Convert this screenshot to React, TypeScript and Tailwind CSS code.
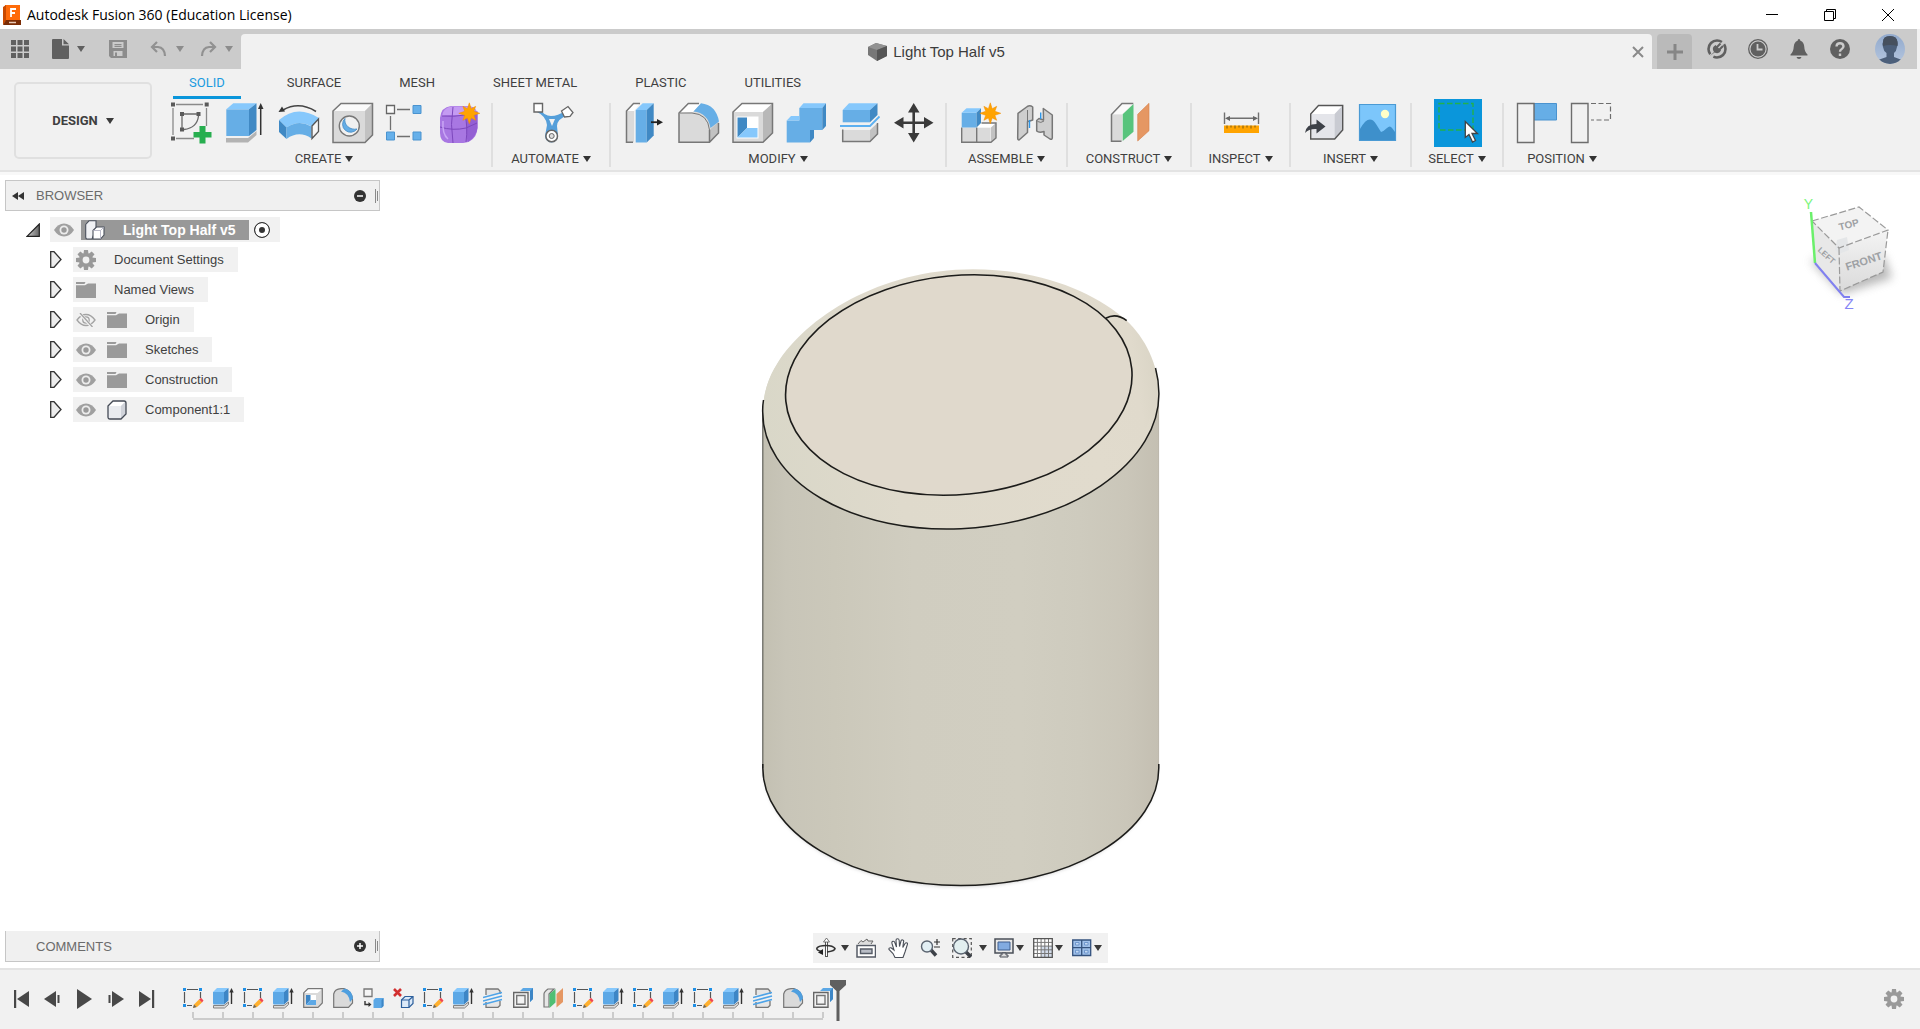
import React from "react";

type P = { className?: string };

/* ---------- small shared pieces ---------- */

function Caret({ className = "text-[#3a3a3a]" }: P) {
  return (
    <svg viewBox="0 0 8 6" className={"h-[6px] w-2 shrink-0 " + className} fill="currentColor" aria-hidden="true">
      <path d="M0 0H8L4 6z" />
    </svg>
  );
}

function Burst({ x, y, s = 1 }: { x: number; y: number; s?: number }) {
  return (
    <path
      transform={`translate(${x} ${y}) scale(${s})`}
      fill="#ffa300"
      stroke="#f08c00"
      strokeWidth=".5"
      d="M0-10.5 1.9-4.6 6.4-7 4.6-2 10.5 0 4.6 2 6.4 7 1.9 4.6 0 10.5-1.9 4.6-6.4 7-4.6 2-10.5 0-4.6-2-6.4-7-1.9-4.6z"
    />
  );
}

function Tile({ children }: { children: React.ReactNode }) {
  return (
    <svg viewBox="0 0 48 48" className="size-12" aria-hidden="true">
      {children}
    </svg>
  );
}

/* ---------- ribbon icons ---------- */

const SketchIcon = (
  <Tile>
    <path d="M10 5.5H37M7 9V36M10 39.5H28M40.5 9V27" stroke="#8a8a8a" strokeWidth="1.3" fill="none" />
    <path d="M5 3.5h4v4H5zM38.700 3.500h4v4h-4zM5 37.500h4v4H5zM14 13h4v4h-4zM30.500 13h4v4h-4zM14 28.500h4v4h-4z" fill="#5a5a5a" />
    <path d="M18 15H31M16 17V29M32.500 17Q31 29 18 30.500" stroke="#6a6a6a" strokeWidth="1.300" fill="none" />
    <path d="M33.500 27h6v6h6v5.500h-6v6h-6v-6h-6V33h6z" fill="#27ae4f" />
  </Tile>
);

const ExtrudeIcon = (
  <Tile>
    <path d="M6 39H28L36.500 32V36L28 43.500H6z" fill="#b3b3b3" />
    <path d="M6.300 10.300H29V37H6.300z" fill="#66aee6" />
    <path d="M6.300 10.300 13.300 4.300H36.500L29 10.300z" fill="#86c8fc" />
    <path d="M29 10.300 36.500 4.300V31L29 37z" fill="#4089c4" />
    <path d="M40.700 8V36" stroke="#333" strokeWidth="1.500" />
    <path d="M40.700 4 43.500 10H38z" fill="#333" />
  </Tile>
);

const RevolveIcon = (
  <Tile>
    <path d="M42 12.500Q25 2 9 11" stroke="#444" strokeWidth="1.500" fill="none" />
    <path d="M4.500 13 8 7.500 11 12.500z" fill="#333" />
    <path d="M5 21Q23 5 45 19L38 27.500Q25 20 12.500 28.500z" fill="#86c8fc" />
    <path d="M5 21 12.500 28.500V40L5 33z" fill="#4089c4" />
    <path d="M12.500 28.500Q25 20 37.500 27.500V39.500Q25 31 12.500 40z" fill="#66aee6" />
    <path d="M38 27 44.500 20V32.500L38 39.500z" fill="#f6f6f6" stroke="#555" strokeWidth="1.300" />
  </Tile>
);

const HoleIcon = (
  <Tile>
    <path d="M5 12 13 4.500H44.500V36L37 43.500H5z" fill="#dadada" />
    <path d="M5 12 13 4.500H44.500L37 12z" fill="#fafafa" />
    <path d="M37 12 44.500 4.500V36L37 43.500z" fill="#c2c2c2" />
    <path d="M5 12 13 4.500H44.500V36L37 43.500H5z" fill="none" stroke="#777" strokeWidth="1.500" />
    <circle cx="21.300" cy="27" r="10" fill="#f1f1f1" stroke="#777" strokeWidth="1.400" />
    <path d="M17 19.500A10 9 0 0 0 29 30 8 8 0 1 1 17 19.500z" fill="#66aee6" stroke="#4089c4" strokeWidth=".8" />
  </Tile>
);

const PatternIcon = (
  <Tile>
    <path d="M15 10.500H28M8.500 17V31M15 37.500H28" stroke="#707070" strokeWidth="1.300" />
    <path d="M4.500 6.500h8v8h-8z" fill="#fafafa" stroke="#666" strokeWidth="1.300" />
    <path d="M31 6.500h8v8h-8zM4.500 33h8v8h-8zM31 33h8v8h-8z" fill="#66b0ea" stroke="#4a93cf" strokeWidth="1" />
  </Tile>
);

const FormIcon = (
  <Tile>
    <path d="M4 19Q5 8 15 7H33Q41 8 41.500 16V29Q41 38 34 42Q31 44 24 44H12Q4 43 4 34z" fill="#a877e2" />
    <path d="M6 17Q7 9 15 7.500H33Q38 8 40 12 34 15 29 16H14Q9 16 6 17z" fill="#c49bf2" />
    <path d="M30 17Q37 15 41.500 12V29Q40 38 32 43 30 40 30 17z" fill="#9460d4" />
    <path d="M17 8Q14 25 17 44M4 28Q17 32 30 29L41 24M29 16Q32 28 30 43M6 17Q18 18 29 16" stroke="#7d48bd" strokeWidth="1" fill="none" />
    <path d="M7 22Q6 35 12 40" stroke="#c9a6f5" strokeWidth="1.500" fill="none" />
    <Burst x={33.300} y={14.300} />
  </Tile>
);

const AutomateIcon = (
  <Tile>
    <path d="M12 10Q16 17 23 17 30 17 37 12L40 16Q29 20 29 27L30 37A6.500 6.500 0 0 1 17 37L19 26Q18 17 9 13z" fill="#559fda" />
    <path d="M21 20H27L24 27z" fill="#f1f1f1" />
    <path d="M6 4.500h8.500v8.500H6z" fill="#fff" stroke="#666" strokeWidth="1.400" />
    <path d="M33.500 12 40 7.500 45 13.500 42 17.500 36.500 18z" fill="#fff" stroke="#666" strokeWidth="1.300" />
    <circle cx="23.700" cy="37" r="5.800" fill="#fff" stroke="#666" strokeWidth="1.500" />
    <circle cx="23.700" cy="37" r="2.500" fill="#ddd" stroke="#666" strokeWidth="1" />
  </Tile>
);

const PressPullIcon = (
  <Tile>
    <path d="M6.500 43.300V12L13.500 4.500H20L14 11V43.300z" fill="#dadada" />
    <path d="M6.500 12 13.500 4.500H20L14 12z" fill="#fff" />
    <path d="M20 4.500H13.500L6.500 12V43.300H13" fill="none" stroke="#777" strokeWidth="1.500" />
    <path d="M15.700 11H26.700V43.500H15.700z" fill="#66aee6" />
    <path d="M15.700 11 22.700 4.300H33.700L26.700 11z" fill="#86c8fc" />
    <path d="M26.700 11 33.700 4.300V36.500L26.700 43.500z" fill="#4089c4" />
    <path d="M31 23.200H38" stroke="#222" strokeWidth="1.800" />
    <path d="M37 20 43 23.200 37 26.500z" fill="#222" />
  </Tile>
);

const FilletIcon = (
  <Tile>
    <path d="M5 43.300V14L14.300 4.500H27L44.500 23V34L35.500 43.300z" fill="#dadada" />
    <path d="M5 14 14.300 4.500H27L19 13z" fill="#fff" />
    <path d="M35.500 31 44.500 23V34L35.500 43.300z" fill="#c2c2c2" />
    <path d="M19.500 12.500 27 4.300Q42 6 45 22.500L36.500 29Q34 14 19.500 12.500z" fill="#66aee6" />
    <path d="M25 4.500H14.300L5 14V43.300H35.500L44.500 34V24M35.500 43V31" fill="none" stroke="#777" strokeWidth="1.500" />
    <path d="M6 14H18Q34 15 35.500 31" fill="none" stroke="#777" strokeWidth="1" />
  </Tile>
);

const ShellIcon = (
  <Tile>
    <path d="M5 13 14 4.500H44.500V34L35 43.300H5z" fill="#dadada" />
    <path d="M5 13 14 4.500H44.500L35 13z" fill="#fff" />
    <path d="M35 13 44.500 4.500V34L35 43.300z" fill="#b8b8b8" />
    <path d="M5 13 14 4.500H44.500V34L35 43.300H5z" fill="none" stroke="#777" strokeWidth="1.500" />
    <path d="M8.500 17.500h22v22h-22z" fill="#fff" />
    <path d="M9.500 18.500H19V29L9.500 38.500z" fill="#4089c4" />
    <path d="M9.500 38.500 19 29H29.500V38.500z" fill="#86c8fc" />
  </Tile>
);

const CombineIcon = (
  <Tile>
    <path d="M4.700 21.500H17.300V9H40.300V31H28V43.500H4.700z" fill="#66aee6" />
    <path d="M17.300 9 21.500 4.300H44L40.300 9zM4.700 21.500 9 17H17.300V21.500z" fill="#86c8fc" />
    <path d="M40.300 9 44 4.300V27L40.300 31zM28 31H32V39L28 43.500z" fill="#4089c4" />
  </Tile>
);

const SplitIcon = (
  <Tile>
    <path d="M6.700 11H34V23.300H6.700z" fill="#66aee6" />
    <path d="M6.700 11 13 4.300H41.500L34 11z" fill="#86c8fc" />
    <path d="M34 11 41.500 4.300V16L34 23.300z" fill="#4089c4" />
    <path d="M4 27H34L43.500 17.500" stroke="#5db0f0" strokeWidth="1.800" fill="none" />
    <path d="M6.700 31H34V42.500H6.700z" fill="#dadada" />
    <path d="M34 31 41.500 24V35L34 42.500z" fill="#c2c2c2" />
    <path d="M6.700 30.500V42.500H34L41.500 35V24" stroke="#777" strokeWidth="1.500" fill="none" />
  </Tile>
);

const MoveIcon = (
  <Tile>
    <path d="M23.700 10V38M10 23.700H38" stroke="#3a3a3a" strokeWidth="2.600" />
    <path
      fill="#3a3a3a"
      d="M23.700 4 29.500 13.500H18zM23.700 43.500 29.500 34H18zM4 23.700 13.500 18V29.500zM43.500 23.700 34 18V29.500z"
    />
  </Tile>
);

const NewComponentIcon = (
  <Tile>
    <path d="M5.700 28.500H34.500V43.300H5.700z" fill="#dadada" />
    <path d="M21 28.500 25.500 24H40L35 28.500z" fill="#fff" />
    <path d="M35 28.500 40 24V39L35 43.300z" fill="#c2c2c2" />
    <path d="M5.700 28.500V43.300H35L40 39V24H25.500M20.700 28.500V43" stroke="#777" strokeWidth="1.400" fill="none" />
    <path d="M5.700 13.700H20.500V28.500H5.700z" fill="#66aee6" />
    <path d="M5.700 13.700 10.500 9.300H25L20.500 13.700z" fill="#86c8fc" />
    <path d="M20.500 13.700 25 9.300V24L20.500 28.500z" fill="#4089c4" />
    <Burst x={34.300} y={14.300} />
  </Tile>
);

const JointIcon = (
  <Tile>
    <g stroke="#777" strokeWidth="1.500" strokeLinejoin="round" fill="#cfcfcf">
      <path d="M8 14.300 17.300 7.500Q20 6 22.700 8V21L17.500 22.700V33.500L9 41Q7.700 41 7.700 39z" />
      <path d="M33.300 9.500 42.300 16V39Q42 41 40 40L34 36V32.500Q29 34 26.700 32V21.500L29 19.500 33.500 21z" />
    </g>
    <path d="M17.500 11V22M27.500 22.500Q31 24.500 34 22" stroke="#777" strokeWidth="1" fill="none" />
    <path d="M19.500 21V29M30.700 13.500V20" stroke="#2d96e8" strokeWidth="1.400" />
  </Tile>
);

const PlaneIcon = (
  <Tile>
    <path d="M5.500 15.500H16V42H5.500z" fill="#dadada" />
    <path d="M5.500 15 16 4.500H27.300L16 15z" fill="#fafafa" />
    <path d="M27.300 4.500H16L5.500 15.500V42.300H15.500" fill="none" stroke="#777" strokeWidth="1.500" />
    <path d="M16.700 15.300 27.500 5V32.700L16.700 42z" fill="#58c47c" />
    <path d="M31.700 15.300 43 4.300V31.700L31.700 42z" fill="#e59763" stroke="#d67f49" strokeWidth=".6" />
  </Tile>
);

const MeasureIcon = (
  <Tile>
    <path d="M7.500 13.500V25M41.500 13.500V25M10 19.300H39" stroke="#707070" strokeWidth="1.400" />
    <path d="M8 19.300 13 17V22zM41 19.300 36 17V22z" fill="#666" />
    <path d="M7 26.500h35v7.500H7z" fill="#ffa400" />
    <path d="M10 26.500v3M14 26.500v2M18 26.500v3M22 26.500v2M26 26.500v3M30 26.500v2M34 26.500v3M38 26.500v2" stroke="#7a5a10" strokeWidth="1" />
  </Tile>
);

const InsertIcon = (
  <Tile>
    <path d="M10.700 15 18.500 6.500H42.700V31L34.700 40H10.700z" fill="#e4e5ea" />
    <path d="M10.700 15 18.500 6.500H42.700L34.700 15z" fill="#fff" />
    <path d="M34.700 15 42.700 6.500V31L34.700 40z" fill="#c9cbd2" />
    <path d="M10.700 15 18.500 6.500H42.700V31L34.700 40H10.700z" fill="none" stroke="#555" strokeWidth="1.400" />
    <path d="M5 34Q6 25 16.500 25V20.500L25.500 27.500 16.500 34.500V30Q9 29.500 5 34z" fill="#3d4148" />
  </Tile>
);

const ImageIcon = (
  <Tile>
    <path d="M5.500 5.500h36v36h-36z" fill="#7cc6fb" stroke="#4a9ad4" strokeWidth="1.200" />
    <circle cx="31" cy="15" r="4.200" fill="#ffffc8" />
    <path d="M6 30Q15 14 22 25L27 33Q30 32 33 29 36 26 38 29L41 33V41H6z" fill="#3e90cb" />
  </Tile>
);

const SelectIcon = (
  <Tile>
    <path d="M0 0H48V48H0z" fill="#0a96db" />
    <path d="M5 4.500h34v26.500h-34z" fill="none" stroke="#22b14c" strokeWidth="1.400" strokeDasharray="5.500 2.500" />
    <path d="M31.300 22.500V38.500L35 35.500 38.500 43 41.500 41.500 38 34.500H43.500z" fill="#fff" stroke="#444" strokeWidth="1.300" />
  </Tile>
);

const CapturePositionIcon = (
  <Tile>
    <path d="M22 4.500h22.500V21H22z" fill="#66aee6" stroke="#4a93cf" strokeWidth="1" />
    <path d="M5.500 4.500H22v39H5.500z" fill="#f1f1f1" stroke="#6d6d6d" strokeWidth="1.400" />
  </Tile>
);

const RevertPositionIcon = (
  <Tile>
    <path d="M25 4.500H44.500V21H25" fill="none" stroke="#6d6d6d" strokeWidth="1.200" strokeDasharray="5 2.500" />
    <path d="M5.500 4.500H22v39H5.500z" fill="#f1f1f1" stroke="#6d6d6d" strokeWidth="1.400" />
  </Tile>
);

type Group = { name: string; width: string; tools: [string, React.ReactNode][] };

const groups: Group[] = [
  {
    name: "CREATE",
    width: "w-[334px]",
    tools: [
      ["Create Sketch", SketchIcon],
      ["Extrude", ExtrudeIcon],
      ["Revolve", RevolveIcon],
      ["Hole", HoleIcon],
      ["Rectangular Pattern", PatternIcon],
      ["Create Form", FormIcon],
    ],
  },
  { name: "AUTOMATE", width: "w-[116px]", tools: [["Automated Modeling", AutomateIcon]] },
  {
    name: "MODIFY",
    width: "w-[334px]",
    tools: [
      ["Press Pull", PressPullIcon],
      ["Fillet", FilletIcon],
      ["Shell", ShellIcon],
      ["Combine", CombineIcon],
      ["Split Body", SplitIcon],
      ["Move", MoveIcon],
    ],
  },
  { name: "ASSEMBLE", width: "w-[119px]", tools: [["New Component", NewComponentIcon], ["Joint", JointIcon]] },
  { name: "CONSTRUCT", width: "w-[122px]", tools: [["Offset Plane", PlaneIcon]] },
  { name: "INSPECT", width: "w-[97px]", tools: [["Measure", MeasureIcon]] },
  { name: "INSERT", width: "w-[119px]", tools: [["Insert Derive", InsertIcon], ["Canvas", ImageIcon]] },
  { name: "SELECT", width: "w-[90px]", tools: [["Select", SelectIcon]] },
  { name: "POSITION", width: "w-[116px]", tools: [["Capture Position", CapturePositionIcon], ["Revert Position", RevertPositionIcon]] },
];

const ribbonTabs = ["SOLID", "SURFACE", "MESH", "SHEET METAL", "PLASTIC", "UTILITIES"];

/* ---------- header ---------- */

function TitleBar() {
  return (
    <header className="flex h-[29px] items-center bg-white pl-[3px] text-black">
      <svg viewBox="0 0 18 20" className="h-5 w-[18px]" aria-hidden="true">
        <path d="M2 0H17V16H1z" fill="#ff6b0a" />
        <path d="M0 2 3 0V16L0 20z" fill="#c94a00" />
        <path d="M3 15H18V20H0z" fill="#7a2c05" />
        <path d="M8 12V4h5M8 8h4" stroke="#fff" strokeWidth="1.800" fill="none" />
        <path d="M6 17.500h7" stroke="#e8c8b4" strokeWidth="1.500" />
      </svg>
      <h1 className="ml-[6px] font-['Open_Sans',sans-serif] text-sm whitespace-nowrap">Autodesk Fusion 360 (Education License)</h1>
      <div className="ml-auto flex items-center gap-[46px] pr-[26px]">
        <button aria-label="Minimize">
          <svg viewBox="0 0 12 12" className="size-3" stroke="#000" aria-hidden="true">
            <path d="M0 5.500H12" />
          </svg>
        </button>
        <button aria-label="Restore">
          <svg viewBox="0 0 12 12" className="size-3" stroke="#000" fill="none" aria-hidden="true">
            <path d="M.500 2.500h9v9h-9zM2.500 2V.500h9v9H10" />
          </svg>
        </button>
        <button aria-label="Close">
          <svg viewBox="0 0 12 12" className="size-3" stroke="#000" aria-hidden="true">
            <path d="M0 0 12 12M12 0 0 12" />
          </svg>
        </button>
      </div>
    </header>
  );
}

function DocumentBar() {
  return (
    <div className="mr-[3px] flex h-10 bg-[#cbcbcb]">
      <div className="flex w-[241px] items-center pl-[11px] text-[#606060]">
        <button aria-label="Data panel">
          <svg viewBox="0 0 18 18" className="size-[18px]" fill="currentColor" aria-hidden="true">
            <path d="M0 0h5v5H0zM6.500 0h5v5h-5zM13 0h5v5h-5zM0 6.500h5v5H0zM6.500 6.500h5v5h-5zM13 6.500h5v5h-5zM0 13h5v5H0zM6.500 13h5v5h-5zM13 13h5v5h-5z" />
          </svg>
        </button>
        <button aria-label="File" className="ml-[23px] flex items-center gap-2">
          <svg viewBox="0 0 17 20" className="h-5 w-[17px]" fill="currentColor" aria-hidden="true">
            <path d="M0 1Q0 0 1 0H10V6.500H17V19Q17 20 16 20H1Q0 20 0 19zM11.500 0 17 5.300H11.500z" />
          </svg>
          <Caret className="text-[#606060]" />
        </button>
        <button aria-label="Save" className="ml-6 text-[#8c8c8c]">
          <svg viewBox="0 0 18 18" className="size-[18px]" aria-hidden="true">
            <path fill="currentColor" fillRule="evenodd" d="M0 0H18V18H2L0 16zM3.500 2V8H14.500V2zM4.500 11V16H13.500V11z" />
            <path fill="currentColor" d="M5.500 4h7v1.200h-7zM5.500 6h7v1h-7zM6 12.500h2V16H6z" />
          </svg>
        </button>
        <button aria-label="Undo" className="ml-[23px] flex items-center gap-[9px] text-[#919191]">
          <svg viewBox="0 0 17 16" className="h-4 w-[17px]" fill="none" stroke="currentColor" strokeWidth="2.200" aria-hidden="true">
            <path d="M7 1 2 6 7 11M2 6H8Q14.500 6.500 15 15" />
          </svg>
          <Caret className="text-[#8c8c8c]" />
        </button>
        <button aria-label="Redo" className="ml-4 flex items-center gap-2 text-[#919191]">
          <svg viewBox="0 0 17 16" className="h-4 w-[17px]" fill="none" stroke="currentColor" strokeWidth="2.200" aria-hidden="true">
            <path d="M10 1 15 6 10 11M15 6H9Q2.500 6.500 2 15" />
          </svg>
          <Caret className="text-[#8c8c8c]" />
        </button>
      </div>

      <div className="mt-[5px] flex flex-1 items-center rounded-t-[4px] bg-[#f1f1f1]">
        <div className="flex flex-1 items-center justify-center gap-[5px] text-[15px] text-[#3c3c3c]">
          <svg viewBox="0 0 20 20" className="size-5" aria-hidden="true">
            <path d="M0 5 8 1 19 4V14L9 19 0 13z" fill="#777" />
            <path d="M0 5 8 1 19 4 9 8z" fill="#929292" />
            <path d="M9 8 19 4V14L9 19z" fill="#555" />
          </svg>
          <span>Light Top Half v5</span>
        </div>
        <button aria-label="Close document" className="mr-2">
          <svg viewBox="0 0 12 12" className="size-3" stroke="#8a8a8a" strokeWidth="2" aria-hidden="true">
            <path d="M1 1 11 11M11 1 1 11" />
          </svg>
        </button>
      </div>

      <button aria-label="New design" className="mt-[5px] ml-[5px] flex w-[35px] items-center justify-center rounded-t-[4px] bg-[#bababa]">
        <svg viewBox="0 0 16 16" className="size-4" stroke="#868686" strokeWidth="3" aria-hidden="true">
          <path d="M8 0V16M0 8H16" />
        </svg>
      </button>
      <div className="ml-[15px] flex items-center gap-[21px] pr-3">
        <button aria-label="Extensions">
          <svg viewBox="0 0 20 20" className="size-5" aria-hidden="true">
            <circle cx="10" cy="10" r="8.500" fill="none" stroke="#606060" strokeWidth="2.600" strokeDasharray="17 4 24 3 5.400 0" />
            <path d="M3 17 7 13Q4 8.500 8.500 6L14 11.500Q12 15.500 7.500 13.500z" fill="#606060" />
            <path d="M9.500 8.500 13.500 4.500M12 11 16 7" stroke="#606060" strokeWidth="2" />
          </svg>
        </button>
        <button aria-label="Job status">
          <svg viewBox="0 0 20 20" className="size-5" aria-hidden="true">
            <circle cx="10" cy="10" r="9.300" fill="none" stroke="#606060" strokeWidth="1.300" />
            <circle cx="10" cy="10" r="7.500" fill="#606060" />
            <path d="M9.500 5V10.500H14.500" stroke="#cbcbcb" strokeWidth="1.800" fill="none" />
          </svg>
        </button>
        <button aria-label="Notifications">
          <svg viewBox="0 0 20 20" className="size-5" fill="#606060" aria-hidden="true">
            <path d="M10 0Q11.300 0 11.400 1.800 15 3 15.300 8 15.500 13 18.500 15.500V16.500H1.500V15.500Q4.500 13 4.700 8 5 3 8.600 1.800 8.700 0 10 0zM7.500 18H12.500Q12 20 10 20T7.500 18z" />
          </svg>
        </button>
        <button aria-label="Help">
          <svg viewBox="0 0 20 20" className="size-5" aria-hidden="true">
            <circle cx="10" cy="10" r="10" fill="#606060" />
            <path d="M6.500 7.500Q6.700 4.200 10 4.200T13.500 7.300Q13.500 9 11.500 10.200 10 11 10 12.800M10 14.500V17" stroke="#cbcbcb" strokeWidth="2.400" fill="none" />
          </svg>
        </button>
        <button aria-label="Account" className="ml-1">
          <svg viewBox="0 0 30 30" className="size-[30px]" aria-hidden="true">
            <defs>
              <clipPath id="avatar"><circle cx="15" cy="15" r="15" /></clipPath>
              <linearGradient id="avatarSky" x1="0" y1="0" x2="0" y2="1">
                <stop offset="0" stopColor="#91a9cc" />
                <stop offset="1" stopColor="#b5c6df" />
              </linearGradient>
            </defs>
            <g clipPath="url(#avatar)">
              <path d="M0 0H30V30H0z" fill="url(#avatarSky)" />
              <path d="M8 8Q8 2 15 2T22.500 8Q23.500 10 22 13 21.500 17 19 19V23L27 26V30H3V26L11.500 23V19Q8.500 17 8 13 6.500 10 8 8z" fill="#4c5f7a" />
              <path d="M8 8Q8 2 15 2T22.500 8V12Q15 10 8 12z" fill="#46505e" />
            </g>
          </svg>
        </button>
      </div>
    </div>
  );
}

function Ribbon() {
  return (
    <div className="border-b-[3px] border-[#f8f8f8]">
      <div className="flex border-b-2 border-[#e3e3e3] bg-[#f1f1f1] font-['Roboto',sans-serif] text-[13px] text-[#3f3f3f]">
        <div className="w-[157px] shrink-0 pt-[13px] pl-[14px]">
          <button className="flex h-[77px] w-[138px] items-center justify-center gap-2 rounded-[5px] border-2 border-[#e0e0e0] font-bold">
            DESIGN <Caret />
          </button>
        </div>
        <div>
          <nav role="tablist" aria-label="Workspace tabs" className="flex gap-7 pl-4">
            {ribbonTabs.map((t, i) => (
              <button
                key={t}
                role="tab"
                aria-selected={i === 0}
                className={
                  i === 0
                    ? "mr-[3px] h-[30px] border-b-[3px] border-[#0a96db] px-4 text-[#1a9be0]"
                    : "h-[30px] border-b-[3px] border-transparent px-[15px] whitespace-nowrap"
                }
              >
                {t}
              </button>
            ))}
          </nav>
          <div className="flex">
            {groups.map((g, i) => (
              <React.Fragment key={g.name}>
                {i > 0 && <div className="mt-1 h-16 w-[2px] bg-[#dfdfdf]" />}
                <section aria-label={g.name} className={"flex shrink-0 flex-col items-center " + g.width}>
                  <div className="flex gap-[6px] pl-px">
                    {g.tools.map(([name, icon]) => (
                      <button key={name} aria-label={name}>
                        {icon}
                      </button>
                    ))}
                  </div>
                  <button className="flex h-[23px] items-center gap-1">
                    {g.name} <Caret className="text-[#333]" />
                  </button>
                </section>
              </React.Fragment>
            ))}
          </div>
        </div>
      </div>
    </div>
  );
}

/* ---------- browser tree ---------- */

function Eye({ off = false }: { off?: boolean }) {
  return (
    <svg viewBox="0 0 20 14" className="h-[14px] w-5 shrink-0" aria-hidden="true">
      {off ? (
        <g fill="none" stroke="#a3a3a3" strokeWidth="1.300">
          <path d="M1 7Q5 1.500 10 1.500T19 7Q15 12.500 10 12.500T1 7z" />
          <circle cx="10" cy="7" r="3.200" />
          <path d="M3.500 0 16 14" stroke="#f1f1f1" strokeWidth="3" />
          <path d="M4 0 16.500 14" />
        </g>
      ) : (
        <>
          <path d="M0 7Q4 .500 10 .500T20 7Q16 13.500 10 13.500T0 7z" fill="#a0a0a0" />
          <circle cx="10" cy="7" r="4.500" fill="#ececec" />
          <circle cx="10" cy="7" r="2.700" fill="#9a9a9a" />
        </>
      )}
    </svg>
  );
}

function Folder() {
  return (
    <svg viewBox="0 0 20 16" className="h-4 w-5 shrink-0" fill="#9a9a9a" aria-hidden="true">
      <path d="M0 0H9.500L8.500 2H0zM0 3.200H9L12 1.500H20V16H0z" />
    </svg>
  );
}

function Gear({ className = "size-5" }: P) {
  return (
    <svg viewBox="-10 -10 20 20" className={className + " shrink-0"} aria-hidden="true">
      <g fill="#999">
        {[0, 45, 90, 135].map((a) => (
          <path key={a} transform={`rotate(${a})`} d="M-2-10H2L2.500-6V6L2 10H-2L-2.500 6V-6z" />
        ))}
        <circle r="7" />
      </g>
      <circle r="3.400" fill="#f1f1f1" />
    </svg>
  );
}

function BodyCube() {
  return (
    <svg viewBox="0 0 20 20" className="size-5 shrink-0" aria-hidden="true">
      <path d="M1 6 6 1H17Q19 1 19 3V14L14 19H3Q1 19 1 17z" fill="#e9ebef" />
      <path d="M1 6 6 1H19L14 6z" fill="#fff" />
      <path d="M14 6 19 1V14L14 19z" fill="#d0d3da" />
      <path d="M1 6 6 1H17Q19 1 19 3V14L14 19H3Q1 19 1 17z" fill="none" stroke="#444a55" strokeWidth="1.300" />
    </svg>
  );
}

const rows: { label: string; vis?: "on" | "off"; icon: React.ReactNode }[] = [
  { label: "Document Settings", icon: <Gear /> },
  { label: "Named Views", icon: <Folder /> },
  { label: "Origin", vis: "off", icon: <Folder /> },
  { label: "Sketches", vis: "on", icon: <Folder /> },
  { label: "Construction", vis: "on", icon: <Folder /> },
  { label: "Component1:1", vis: "on", icon: <BodyCube /> },
];

function Grip() {
  return (
    <span className="flex items-center gap-px">
      <span className="h-[14px] w-px bg-[#8a8a8a]" />
      <span className="h-[10px] w-px bg-[#8a8a8a]" />
    </span>
  );
}

function Browser() {
  return (
    <aside aria-label="Browser" className="w-[375px] text-[13px] text-[#3f3f3f]">
      <div className="flex h-[31px] items-center border border-[#c6c6c6] bg-[#f0f0f0] pr-px pl-[6px]">
        <button aria-label="Collapse browser">
          <svg viewBox="0 0 12 8" className="h-2 w-3" fill="#333" aria-hidden="true">
            <path d="M6 0V8L0 4zM12 0V8L6 4z" />
          </svg>
        </button>
        <h2 className="ml-3 text-[#6b6b6b]">BROWSER</h2>
        <button aria-label="Panel options" className="mr-[9px] ml-auto">
          <svg viewBox="0 0 12 12" className="size-3" aria-hidden="true">
            <circle cx="6" cy="6" r="6" fill="#333" />
            <path d="M3 6H9" stroke="#fff" strokeWidth="1.500" />
          </svg>
        </button>
        <Grip />
      </div>

      <ul role="tree" className="mt-[6px] flex flex-col items-start gap-[5px]">
        <li role="treeitem" aria-expanded="true" className="flex h-[25px] items-center pl-[21px]">
          <button aria-label="Collapse" className="mr-[10px]">
            <svg viewBox="0 0 14 14" className="size-[14px]" aria-hidden="true">
              <defs>
                <linearGradient id="open" x1="0" x2="1">
                  <stop offset="0" stopColor="#ccc" />
                  <stop offset="1" stopColor="#666" />
                </linearGradient>
              </defs>
              <path d="M1 13.300 13.300 1V13.300z" fill="url(#open)" stroke="#222" strokeWidth="1.200" />
            </svg>
          </button>
          <div className="flex h-full items-center bg-[#f1f1f1] pr-[10px] pl-1">
            <Eye />
            <div className="ml-[7px] flex h-5 items-center bg-[#989898] pr-[13px] pl-1">
              <svg viewBox="0 0 20 20" className="size-5" aria-hidden="true">
                <path d="M.700 4.500 4 .800H11V9L7 19H2Q.700 19 .700 17z" fill="#f0f1f4" stroke="#4a505c" strokeWidth="1.100" />
                <path d="M8 10.500 11.500 7H19V15L15.500 19H8z" fill="#fff" stroke="#4a505c" strokeWidth="1.100" />
                <path d="M8 10.500H15.500V19M15.500 10.500 19 7" fill="none" stroke="#aab" strokeWidth=".800" />
              </svg>
              <span className="ml-[18px] text-sm font-bold text-white">Light Top Half v5</span>
            </div>
            <input
              type="radio"
              name="active"
              defaultChecked
              aria-label="Activate Light Top Half v5"
              className="ml-[5px] size-4 appearance-none rounded-full border border-[#333] bg-[#333] shadow-[inset_0_0_0_4px_#fff]"
            />
          </div>
        </li>
        {rows.map((r) => (
          <li key={r.label} role="treeitem" aria-expanded="false" className="flex h-[25px] items-center pl-[45px]">
            <button aria-label={"Expand " + r.label} className="mr-[11px]">
              <svg viewBox="0 0 12 17" className="h-[17px] w-3" aria-hidden="true">
                <path d="M.700.700H4L11 8.500 4 16.300H.700z" fill="#ececec" stroke="#333" strokeWidth="1.300" />
              </svg>
            </button>
            <div className="flex h-full items-center bg-[#f1f1f1] pr-[14px] pl-[3px]">
              {r.vis && (
                <button aria-label={"Toggle " + r.label} className="mr-[11px]">
                  <Eye off={r.vis === "off"} />
                </button>
              )}
              {r.icon}
              <span className="ml-[18px]">{r.label}</span>
            </div>
          </li>
        ))}
      </ul>
    </aside>
  );
}

/* ---------- canvas ---------- */

function Model() {
  return (
    <svg viewBox="0 0 400 624" className="h-[624px] w-[400px]" role="img" aria-label="Cylinder with filleted slanted top">
      <defs>
        <linearGradient id="side" x1="0" x2="1">
          <stop offset="0" stopColor="#c3c0b2" />
          <stop offset=".06" stopColor="#c8c5b8" />
          <stop offset=".18" stopColor="#cbc8ba" />
          <stop offset=".38" stopColor="#d0cdc0" />
          <stop offset=".65" stopColor="#d1cec1" />
          <stop offset=".8" stopColor="#cecbbe" />
          <stop offset=".92" stopColor="#cac6b9" />
          <stop offset="1" stopColor="#c4bfb2" />
        </linearGradient>
        <linearGradient id="rim" gradientUnits="userSpaceOnUse" x1="2" y1="160" x2="399" y2="100">
          <stop offset="0" stopColor="#d9d7c8" />
          <stop offset=".3" stopColor="#dfdacc" />
          <stop offset=".8" stopColor="#e1dbcd" />
          <stop offset=".94" stopColor="#e0dacc" />
          <stop offset="1" stopColor="#d9d4c5" />
        </linearGradient>
        <filter id="soft" x="-5%" y="-5%" width="110%" height="110%">
          <feGaussianBlur stdDeviation="2" />
        </filter>
      </defs>
      <path d="M5 504A190 112.600 0 0 0 396 504z" fill="#999" filter="url(#soft)" opacity=".7" />
      <path d="M2.800 140V502A197 117 0 0 0 398.800 502V127z" fill="url(#side)" />
      <path d="M2.800 140V502" stroke="#55544e" strokeWidth="1.100" />
      <path d="M398.600 130V502" stroke="#b5b0a4" strokeWidth=".800" />
      <path d="M2.800 498V502A197 117 0 0 0 398.800 502V498" fill="none" stroke="#1c1c1a" strokeWidth="1.500" />
      <ellipse cx="200.800" cy="137" rx="198.400" ry="125.500" transform="rotate(-4.280 200.800 137)" fill="url(#rim)" />
      <path d="M2.800 146C3.500 126 9 110 17 98C45 52 120 3.300 213 3.300C280 3.300 335 26 367 55C385 72 398.500 98 398.800 127L380 180H30z" fill="url(#rim)" />
      <path d="M3.500 134Q2.500 140 2.700 146A197 124.600 -4.280 0 0 398.900 128Q399 115 395.500 102" fill="none" stroke="#1c1c1a" strokeWidth="1.500" />
      <ellipse cx="198.800" cy="119" rx="173.700" ry="109.500" transform="rotate(-5.400 198.800 119)" fill="#e0d9cc" stroke="#1c1c1a" strokeWidth="1.600" />
      <path d="M345.700 52.300Q356 46.500 366.700 54.700" fill="none" stroke="#1c1c1a" strokeWidth="1.600" />
    </svg>
  );
}

function ViewCube() {
  return (
    <svg viewBox="0 0 140 140" className="size-[140px]" role="img" aria-label="View cube" fontFamily="Liberation Sans, Arial, sans-serif">
      <defs>
        <filter id="cubeShadow" x="-30%" y="-30%" width="160%" height="160%">
          <feGaussianBlur stdDeviation="5" />
        </filter>
        <linearGradient id="front" x1="0" y1="0" x2="0" y2="1">
          <stop offset="0" stopColor="#f4f4f4" />
          <stop offset="1" stopColor="#dadada" />
        </linearGradient>
      </defs>
      <path d="M30 80 62 114 112 98 104 76z" fill="#8a8a8a" opacity=".6" filter="url(#cubeShadow)" />
      <path d="M32 41 79 27 108 50 59 68z" fill="#f3f3f3" />
      <path d="M32 41 59 68 60 111 35 83z" fill="#e8e8e8" />
      <path d="M59 68 108 50 103 92 60 111z" fill="url(#front)" />
      <path d="M57 60 67 57 69 70 59 74 55 70z" fill="#e4e6e8" />
      <g fill="none" stroke="#9a9a9a" strokeWidth="1.200" strokeDasharray="7 2.500">
        <path d="M32 41 79 27 108 50 59 68z" />
        <path d="M59 68 60 111 103 92 108 50" />
      </g>
      <path d="M31 32 35 83" stroke="#6bf06b" strokeWidth="2.500" />
      <path d="M35 83 64 117H70" stroke="#8080f0" strokeWidth="2" fill="none" />
      <g fill="#9ea1a4" fontWeight="bold" textAnchor="middle">
        <text x="69" y="48" fontSize="10" transform="rotate(-14 69 45)">TOP</text>
        <text x="84" y="85" fontSize="11" transform="rotate(-18 84 82)">FRONT</text>
        <text x="46" y="78" fontSize="8" transform="rotate(42 46 76)">LEFT</text>
      </g>
      <text x="28.500" y="29" fontSize="14" textAnchor="middle" fill="#7bf57b">Y</text>
      <text x="69" y="129" fontSize="15" textAnchor="middle" fill="#8585f5">Z</text>
    </svg>
  );
}

function NavIcon({ children }: { children: React.ReactNode }) {
  return (
    <svg viewBox="0 0 20 20" className="size-5" aria-hidden="true">
      {children}
    </svg>
  );
}

function NavigationBar() {
  return (
    <div role="toolbar" aria-label="Navigation" className="mb-[5px] flex h-[30px] items-center bg-[#f1f1f1] pr-[6px] pl-[3px]">
      <button aria-label="Orbit" className="flex items-center gap-[5px]">
        <NavIcon>
          <path d="M10.500 2V19" stroke="#555" strokeWidth="3" />
          <path d="M10.500 3V18" stroke="#fff" strokeWidth="1" />
          <path d="M10.500 0 13.500 4H7.500z" fill="#fff" stroke="#555" strokeWidth=".800" />
          <path d="M6 13.500Q0 12.500 1 10 3 7.500 10 7.500T19 10.500Q19 13 11 14" fill="none" stroke="#333" strokeWidth="1.600" />
          <path d="M2 14.500 7 11V17z" fill="#222" />
        </NavIcon>
        <Caret />
      </button>
      <button aria-label="Look at" className="ml-[7px]">
        <NavIcon>
          <path d="M1 7.500H19.500V19H1z" fill="#fff" stroke="#555b66" strokeWidth="1.500" />
          <path d="M4.500 11H16V15.500H4.500z" fill="#b9bdc6" stroke="#555b66" strokeWidth="1.400" />
          <path d="M2 6 5 2.500 7 4 11 1 12 3H17L15 6" fill="#ddd" stroke="#666" strokeWidth="1" />
        </NavIcon>
      </button>
      <button aria-label="Pan" className="ml-3">
        <NavIcon>
          <path
            d="M7 19.500 5 15.500 1 11.500Q.500 9.500 3 9.800L6 12 4 5.500Q3.500 3.500 5 3.300T7 5L8.500 9 8 2.500Q8 .800 9.500.800T11.200 2.500L11.500 8.500 13 3Q13.500 1.500 14.800 2T15.500 4L14.800 9.500 17 5.500Q18 4.300 19 5T19.200 7L17 14 15 19.500z"
            fill="#fff"
            stroke="#4a4f58"
            strokeWidth="1.100"
          />
        </NavIcon>
      </button>
      <button aria-label="Zoom" className="ml-3">
        <NavIcon>
          <path d="M11 12 16 17.500" stroke="#3d4148" strokeWidth="3.500" />
          <circle cx="7" cy="8.500" r="5.500" fill="#e2eff4" stroke="#5b6470" strokeWidth="1.400" />
          <path d="M14 4H20M17 1V7M14 9H20" stroke="#333" strokeWidth="1.200" />
        </NavIcon>
      </button>
      <button aria-label="Zoom window" className="ml-3 flex items-center gap-[7px]">
        <NavIcon>
          <path d="M.700.700H19.300V19.300H.700z" fill="none" stroke="#555" strokeWidth="1.200" strokeDasharray="3 2.500" />
          <path d="M13.500 13.500 19 19" stroke="#3d4148" strokeWidth="3.500" />
          <circle cx="9" cy="8.500" r="7.500" fill="#e2eff0" stroke="#5b6470" strokeWidth="1.400" />
        </NavIcon>
        <Caret />
      </button>
      <button aria-label="Display settings" className="ml-[7px] flex items-center gap-[2px]">
        <NavIcon>
          <path d="M1 1H19V15H1z" fill="#e8e8e8" stroke="#4a4f58" strokeWidth="1.500" />
          <path d="M4 4H16V12H4z" fill="#82abe0" stroke="#3f5f8f" strokeWidth="1" />
          <path d="M8 15H12V17H14V19H6V17H8z" fill="#ddd" stroke="#4a4f58" strokeWidth="1" />
        </NavIcon>
        <Caret />
      </button>
      <button aria-label="Grid and snaps" className="ml-[9px] flex items-center gap-[2px]">
        <NavIcon>
          <path d="M.700.700H19.300V19.300H.700z" fill="#fff" />
          <path d="M8 8H19V19H8z" fill="#d3dcea" />
          <path d="M4.400 1V19M8.100 1V19M11.800 1V19M15.500 1V19M1 4.400H19M1 8.100H19M1 11.800H19M1 15.500H19" stroke="#777" strokeWidth="1" />
          <path d="M.700.700H19.300V19.300H.700z" fill="none" stroke="#555" strokeWidth="1.300" />
        </NavIcon>
        <Caret />
      </button>
      <button aria-label="Viewports" className="ml-[9px] flex items-center gap-[2px]">
        <NavIcon>
          <path
            d="M.700 2H9.700V9.700H.700zM9.700 2H18.700V9.700H9.700zM.700 9.700H9.700V17.500H.700zM9.700 9.700H18.700V17.500H9.700z"
            fill="#9fc0ea"
            stroke="#35537f"
            strokeWidth="1.300"
          />
          <path d="M3.500 4.500H7V7H3.500zM12.500 4.500H16V7H12.500zM3.500 12.300H7V15H3.500zM12.500 12.300H16V15H12.500z" fill="#c4daf5" stroke="#5f8ac4" strokeWidth=".800" />
        </NavIcon>
        <Caret />
      </button>
    </div>
  );
}

function Canvas() {
  return (
    <main className="grid flex-1 grid-rows-1 bg-white">
      <div className="col-start-1 row-start-1 place-self-center pt-[13px]">
        <Model />
      </div>
      <div className="col-start-1 row-start-1 flex flex-col justify-between">
        <div className="flex items-start justify-between pt-[5px] pl-[5px]">
          <Browser />
          <ViewCube />
        </div>
        <div className="grid grid-cols-[1fr_auto_1fr] items-end">
          <section aria-label="Comments" className="mb-[6px] ml-[5px] flex h-[31px] w-[375px] items-center border border-t-0 border-[#c6c6c6] bg-[#f0f0f0] pr-px pl-[30px]">
            <h2 className="text-[13px] text-[#6b6b6b]">COMMENTS</h2>
            <button aria-label="Add comment" className="mr-[9px] ml-auto">
              <svg viewBox="0 0 12 12" className="size-3" aria-hidden="true">
                <circle cx="6" cy="6" r="6" fill="#333" />
                <path d="M3 6H9M6 3V9" stroke="#fff" strokeWidth="1.500" />
              </svg>
            </button>
            <Grip />
          </section>
          <NavigationBar />
        </div>
      </div>
    </main>
  );
}

/* ---------- timeline ---------- */

const features: Record<string, React.ReactNode> = {
  sketch: (
    <>
      <path d="M4 1.500H15M1.500 4V15M4 17.500H9M17.500 4V10" stroke="#555" strokeWidth="1.200" fill="none" />
      <path d="M0 0h3v3H0zM16 0h3v3h-3zM0 16h3v3H0z" fill="#1e8fe6" />
      <path d="M10 20 11 16.500 16 11.500 19 14.500 14 19z" fill="#ffb02e" />
      <path d="M16 11.500 18 9.800 20.500 12.500 19 14.500z" fill="#f2474f" />
      <path d="M10 20 11 16.500 13.500 19z" fill="#666" />
    </>
  ),
  extrude: (
    <>
      <path d="M.500 17.500H11L15.500 14V16.500L11.500 20H.500z" fill="#ddd" stroke="#777" strokeWidth=".900" />
      <path d="M0 4H11V16.500H1Q0 16.500 0 15z" fill="#5ca8e6" />
      <path d="M0 4 4 0H15.500L11 4z" fill="#86c8fc" />
      <path d="M11 4 15.500 0V12.500L11 16.500z" fill="#3d86c6" />
      <path d="M18.500 3V16" stroke="#333" strokeWidth="1.400" />
      <path d="M18.500 0 20.700 4.500H16.300z" fill="#333" />
    </>
  ),
  shell: (
    <>
      <path d="M.700 5 5 .700H19.300V15L15 19.300H.700z" fill="#dadada" stroke="#777" strokeWidth="1.200" />
      <path d="M1.500 5 5.500 1.500H18.500L14.500 5z" fill="#fff" />
      <path d="M3 7H13V17H3z" fill="#fff" />
      <path d="M3 7H7.500V12L3 17z" fill="#3d86c6" />
      <path d="M3 17 7.500 12H13V17z" fill="#5ca8e6" />
    </>
  ),
  fillet: (
    <>
      <path d="M.700 19.300V6Q2 1 8 .700H11Q19 3 19.500 12V15L15.500 19.300z" fill="#dadada" stroke="#777" strokeWidth="1.200" />
      <path d="M8 3.500 11.500.500Q19 2 20 10.500L17 14Q16 5 8 3.500z" fill="#4f9fdf" />
    </>
  ),
  move: (
    <>
      <path d="M1 1H9V8.500H1z" fill="#f6f6f6" stroke="#777" strokeWidth="1.300" />
      <path d="M2 13V16.500H6" stroke="#333" strokeWidth="1.400" fill="none" />
      <path d="M5.500 14 8.500 16.500 5.500 19z" fill="#333" />
      <path d="M10.500 12 12.500 10H20.500V18L18.500 20H10.500z" fill="#5ca8e6" />
      <path d="M18.500 12 20.500 10V18L18.500 20z" fill="#3d86c6" />
    </>
  ),
  remove: (
    <>
      <path d="M1 1 8 8M8 1 1 8" stroke="#d22f2f" strokeWidth="2.600" />
      <path d="M8.500 12 12 8.500H20V15.500L16 19.500H8.500z" fill="#dbe9f8" stroke="#2c5f9c" strokeWidth="1.200" />
      <path d="M8.500 12H16V19.500M16 12 20 8.500" fill="none" stroke="#2c5f9c" strokeWidth="1.200" />
    </>
  ),
  split: (
    <>
      <path d="M3 7V1H15L17 3V6M3 14V19.300H15L17 17.500V13" fill="#e6e6e6" stroke="#777" strokeWidth="1.300" />
      <path d="M0 9.500 19 4.500M0 13 19 8M0 16.500 19 11.500" stroke="#4da3e8" strokeWidth="1.500" />
    </>
  ),
  offset: (
    <>
      <path d="M7 3 10 0H20V11L17 14V3z" fill="#5ca8e6" />
      <path d="M17 3 20 0V11L17 14z" fill="#3d86c6" />
      <path d="M.700 4.500H15V19.300H.700z" fill="#f3f3f3" stroke="#666" strokeWidth="1.400" />
      <path d="M3.700 7.500H12V16.300H3.700z" fill="#f3f3f3" stroke="#777" strokeWidth="1.400" />
    </>
  ),
  plane: (
    <>
      <path d="M1 19V6Q1 4 5 1H11L6 6V19z" fill="#e6e6e6" stroke="#777" strokeWidth="1.200" />
      <path d="M6.500 6 12.500 1V14.500L6.500 20z" fill="#4fbf74" />
      <path d="M13.500 6 20 0V14L13.500 19.500z" fill="#e59763" />
    </>
  ),
};

const steps = [
  "sketch", "extrude", "sketch", "extrude", "shell", "fillet", "move", "remove", "sketch", "extrude", "split",
  "offset", "plane", "sketch", "extrude", "sketch", "extrude", "sketch", "extrude", "split", "fillet", "offset",
];

const playback: [string, string][] = [
  ["Go to start", "M2 1H4.200V19H2zM17 2V18L5 10z"],
  ["Step back", "M13 2V18L1 10zM14.500 6H16.500V14H14.500z"],
  ["Play", "M3 0 18 10 3 20z"],
  ["Step forward", "M7 2V18L19 10zM3.500 6H5.500V14H3.500z"],
  ["Go to end", "M3 2V18L15 10zM16 1H18.200V19H16z"],
];

function Timeline() {
  return (
    <footer className="flex h-[61px] items-start border-t-2 border-[#e3e3e3] bg-[#f1f1f1]">
      <div className="flex gap-[11px] pt-[19px] pl-3">
        {playback.map(([name, d]) => (
          <button key={name} aria-label={name}>
            <svg viewBox="0 0 20 20" className="size-5" fill="#484848" aria-hidden="true">
              <path d={d} />
            </svg>
          </button>
        ))}
      </div>
      <ol aria-label="Timeline" className="ml-[22px] flex">
        {steps.map((s, i) => (
          <li key={i} className="flex w-[30px] flex-col items-center pt-[18px]">
            <button aria-label={s + " " + (i + 1)}>
              <svg viewBox="0 0 21 21" className="size-[21px]" aria-hidden="true">
                {features[s]}
              </svg>
            </button>
            <span className="mt-[3px] h-[6px] w-[2px] bg-[#cbcbcb]" />
            <span className="flex w-full">
              <span className={i === 0 ? "h-[2px] w-1/2" : "h-[2px] w-1/2 bg-[#cbcbcb]"} />
              <span className={i === steps.length - 1 ? "h-[2px] w-1/2" : "h-[2px] w-1/2 bg-[#cbcbcb]"} />
            </span>
          </li>
        ))}
      </ol>
      <svg viewBox="0 0 16 42" className="z-10 mt-[10px] -ml-2 h-[42px] w-4" fill="#5f5f5f" aria-hidden="true">
        <path d="M0 0H16V5L9.500 11V41H6.500V11L0 5z" />
      </svg>
      <button aria-label="Timeline settings" className="mt-[19px] mr-4 ml-auto">
        <Gear className="size-5" />
      </button>
    </footer>
  );
}

export default function App() {
  return (
    <div className="flex min-h-screen flex-col overflow-hidden bg-white font-['Liberation_Sans',Arial,sans-serif] leading-none">
      <TitleBar />
      <div className="bg-[#f1f1f1]">
        <DocumentBar />
      </div>
      <Ribbon />
      <Canvas />
      <Timeline />
    </div>
  );
}
